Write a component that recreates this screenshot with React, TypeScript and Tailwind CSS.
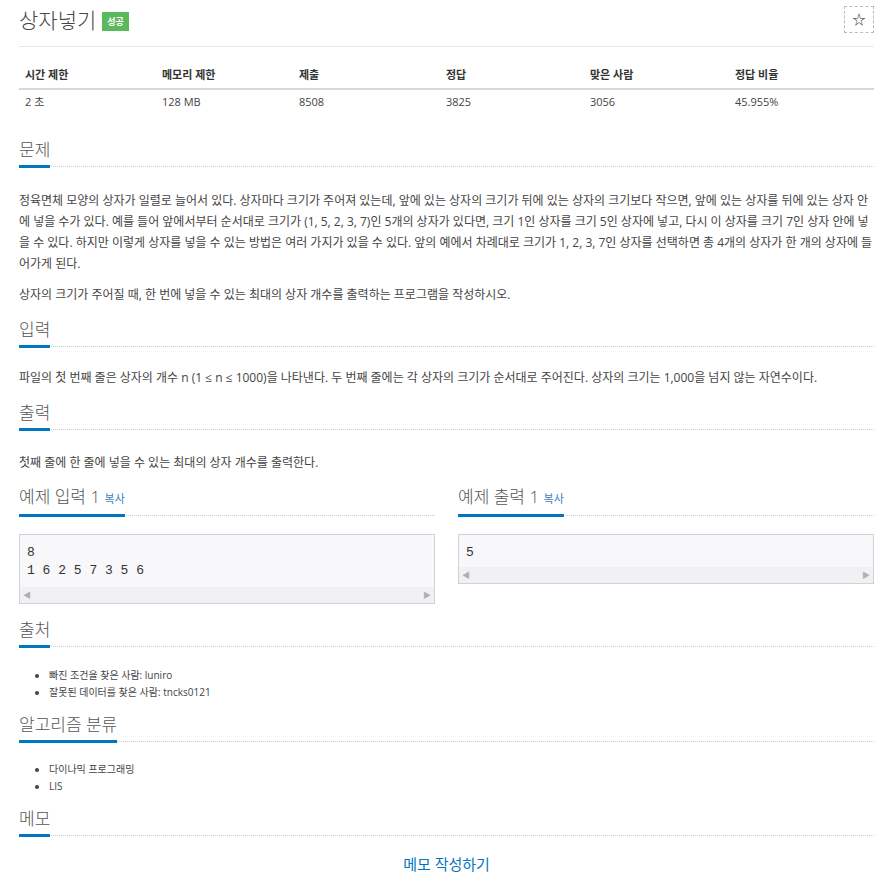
import React from "react";

const font = "font-['Open_Sans','Noto_Sans_CJK_KR',sans-serif]";

function Heading({ children }: { children: React.ReactNode }) {
  return (
    <div className="border-b border-dotted border-[#c8ccd6] flex">
      <h2 className="text-[17px] leading-[26px] text-[#555] font-light border-b-[3px] border-[#0076c0] -mb-[2px] pb-[2px]">
        {children}
      </h2>
    </div>
  );
}

function SampleBox({ lines, h }: { lines: string[]; h: string }) {
  return (
    <div className={`border border-[#ccd3dc] bg-[#f8f8fa] flex flex-col ${h}`}>
      <pre className="px-[7px] pt-[9px] text-[13px] leading-[18px] text-[#333] font-['Liberation_Mono',monospace] flex-1">
        {lines.join("\n")}
      </pre>
      <div className="h-[16px] bg-[#f1f1f3] flex items-center justify-between px-[3px] text-[8px] text-[#b0b0b0]">
        <span>◀</span>
        <span>▶</span>
      </div>
    </div>
  );
}

export default function App() {
  const cols = [
    ["시간 제한", "2 초", "w-[137px]"],
    ["메모리 제한", "128 MB", "w-[137px]"],
    ["제출", "8508", "w-[147px]"],
    ["정답", "3825", "w-[144px]"],
    ["맞은 사람", "3056", "w-[145px]"],
    ["정답 비율", "45.955%", "w-[145px]"],
  ];

  const body = "text-[12px] leading-[21px] text-[#444]";

  return (
    <div className={`w-[896px] min-h-[890px] bg-white pl-[19px] pr-[22px] ${font} text-[#444]`}>
      <div className="h-[47px] border-b border-[#f0e2f2] flex items-start justify-between">
        <div className="flex items-center gap-[6px] pt-[6px]">
          <h1 className="text-[21px] leading-[28px] text-[#444] font-light">상자넣기</h1>
          <span className="bg-[#5cb85c] text-white text-[9px] font-bold px-[5px] leading-[19px] mt-[3px]">
            성공
          </span>
        </div>
        <button className="mt-[6px] w-[30px] h-[27px] border border-dashed border-[#bbb] text-[13px] text-[#333] flex items-center justify-center">
          ☆
        </button>
      </div>

      <table className="mt-[16px] w-full text-[11px] border-collapse">
        <thead>
          <tr className="border-b-2 border-[#d8d8d8]">
            {cols.map((c) => (
              <th key={c[0]} className={`${c[2]} text-left font-bold text-[#333] px-[6px] h-[26px]`}>
                {c[0]}
              </th>
            ))}
          </tr>
        </thead>
        <tbody>
          <tr>
            {cols.map((c) => (
              <td key={c[0]} className="px-[6px] h-[26px] text-[#444]">
                {c[1]}
              </td>
            ))}
          </tr>
        </tbody>
      </table>

      <div className="mt-[22px]">
        <Heading>문제</Heading>
        <div className={`${body} pt-[23px]`}>
          <p>
            정육면체 모양의 상자가 일렬로 늘어서 있다. 상자마다 크기가 주어져 있는데, 앞에 있는 상자의 크기가 뒤에 있는 상자의 크기보다 작으면, 앞에 있는 상자를 뒤에 있는 상자 안에 넣을 수가 있다. 예를 들어 앞에서부터 순서대로 크기가 (1, 5, 2, 3, 7)인 5개의 상자가 있다면, 크기 1인 상자를 크기 5인 상자에 넣고, 다시 이 상자를 크기 7인 상자 안에 넣을 수 있다. 하지만 이렇게 상자를 넣을 수 있는 방법은 여러 가지가 있을 수 있다. 앞의 예에서 차례대로 크기가 1, 2, 3, 7인 상자를 선택하면 총 4개의 상자가 한 개의 상자에 들어가게 된다.
          </p>
          <p className="mt-[10px]">
            상자의 크기가 주어질 때, 한 번에 넣을 수 있는 최대의 상자 개수를 출력하는 프로그램을 작성하시오.
          </p>
        </div>
      </div>

      <div className="mt-[12px]">
        <Heading>입력</Heading>
        <p className={`${body} pt-[20px]`}>
          파일의 첫 번째 줄은 상자의 개수 n (1 ≤ n ≤ 1000)을 나타낸다. 두 번째 줄에는 각 상자의 크기가 순서대로 주어진다. 상자의 크기는 1,000을 넘지 않는 자연수이다.
        </p>
      </div>

      <div className="mt-[12px]">
        <Heading>출력</Heading>
        <p className={`${body} pt-[22px]`}>
          첫째 줄에 한 줄에 넣을 수 있는 최대의 상자 개수를 출력한다.
        </p>
      </div>

      <div className="mt-[11px] grid grid-cols-2 gap-[23px]">
        <div>
          <Heading>
            예제 입력 1 <span className="text-[11px] text-[#3f7fc1] font-normal">복사</span>
          </Heading>
          <div className="mt-[18px]">
            <SampleBox lines={["8", "1 6 2 5 7 3 5 6"]} h="h-[70px]" />
          </div>
        </div>
        <div>
          <Heading>
            예제 출력 1 <span className="text-[11px] text-[#3f7fc1] font-normal">복사</span>
          </Heading>
          <div className="mt-[18px]">
            <SampleBox lines={["5"]} h="h-[50px]" />
          </div>
        </div>
      </div>

      <div className="mt-[13px]">
        <Heading>출처</Heading>
        <ul className="list-disc pl-[30px] pt-[20px] text-[10px] leading-[17px] text-[#444]">
          <li>빠진 조건을 찾은 사람: luniro</li>
          <li>잘못된 데이터를 찾은 사람: tncks0121</li>
        </ul>
      </div>

      <div className="mt-[11px]">
        <Heading>알고리즘 분류</Heading>
        <ul className="list-disc pl-[30px] pt-[19px] text-[10px] leading-[17px] text-[#444]">
          <li>다이나믹 프로그래밍</li>
          <li>LIS</li>
        </ul>
      </div>

      <div className="mt-[11px]">
        <Heading>메모</Heading>
        <div className="text-center pt-[16px]">
          <button className="text-[15px] text-[#0076c0]">메모 작성하기</button>
        </div>
      </div>
    </div>
  );
}
